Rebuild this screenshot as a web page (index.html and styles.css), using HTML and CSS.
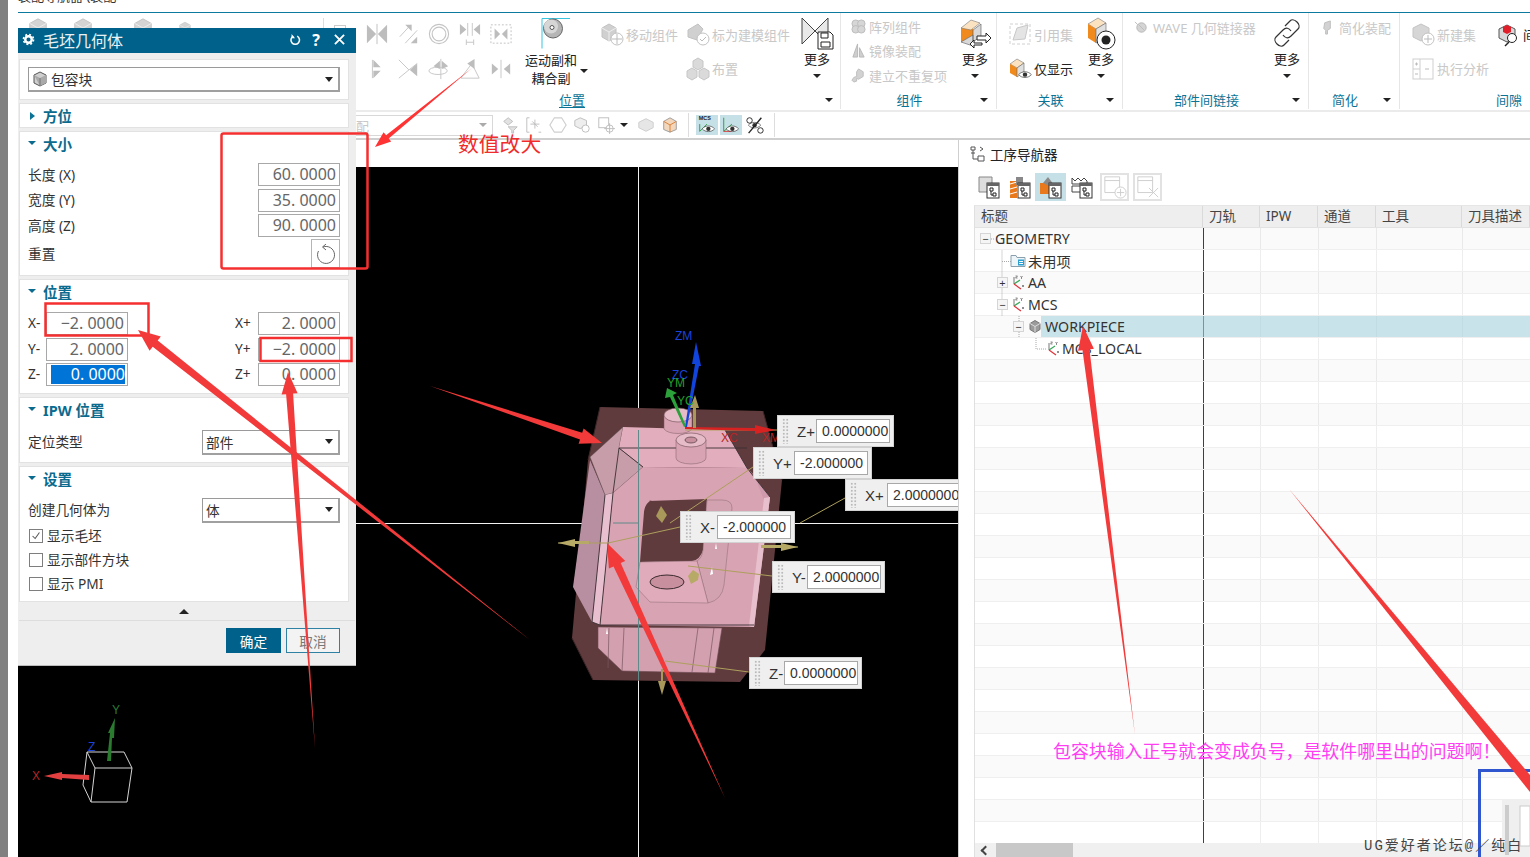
FILE: index.html
```html
<!DOCTYPE html>
<html lang="zh-CN">
<head>
<meta charset="utf-8">
<title>毛坯几何体</title>
<link rel="stylesheet" href="styles.css">
</head>
<body>
<svg class="defs" width="0" height="0" aria-hidden="true">
  <symbol id="c1" viewBox="0 0 24 24"><path d="M1 2l10 10L1 22zM23 2L13 12l10 10z" fill="#bdbdbd"/><path d="M12 1v22" stroke="#bdbdbd"/></symbol>
  <symbol id="c2" viewBox="0 0 24 24"><path d="M3 15L15 2M9 22L22 8" stroke="#c4c4c4" fill="none"/><path d="M9 2h7v7zM15 22h7v-7z" fill="#bdbdbd"/></symbol>
  <symbol id="c3" viewBox="0 0 24 24"><circle cx="12" cy="12" r="10.500" fill="none" stroke="#c4c4c4" stroke-width="1.200"/><circle cx="12" cy="12" r="7.500" fill="none" stroke="#c4c4c4" stroke-width="1.200"/></symbol>
  <symbol id="c4" viewBox="0 0 24 24"><path d="M1 1l7 6-7 6zM23 1l-7 6 7 6z" fill="#bdbdbd"/><path d="M9.500 0v14M14.500 0v14M8 21h8M8 18v6M16 18v6" stroke="#c4c4c4" fill="none"/></symbol>
  <symbol id="c5" viewBox="0 0 24 24"><rect x="1" y="2" width="22" height="20" fill="none" stroke="#bdbdbd" stroke-dasharray="2 2"/><path d="M5 6l6 6-6 6zM19 6l-6 6 6 6z" fill="#bdbdbd"/></symbol>
  <symbol id="c6" viewBox="0 0 24 24"><path d="M7 2v20" stroke="#c4c4c4"/><path d="M8 2l8 8H8zM8 14h8l-8 8z" fill="#bdbdbd"/></symbol>
  <symbol id="c7" viewBox="0 0 24 24"><path d="M2 2l11 11-11 9M22 6L13 13" stroke="#c4c4c4" fill="none"/><path d="M22 6v14l-8-7z" fill="#bdbdbd"/></symbol>
  <symbol id="c8" viewBox="0 0 24 24"><ellipse cx="11" cy="14" rx="10" ry="4" fill="none" stroke="#c4c4c4"/><path d="M14 1v22" stroke="#c4c4c4"/><path d="M13 3v9l-7-3zM15 3v9l7-3z" fill="#bdbdbd"/></symbol>
  <symbol id="c9" viewBox="0 0 24 24"><path d="M2 22h20L14 6 2 22" fill="none" stroke="#c4c4c4"/><path d="M9 6l8-5v11z" fill="#bdbdbd"/></symbol>
  <symbol id="c10" viewBox="0 0 24 24"><path d="M2 6l7 6-7 6zM22 6l-7 6 7 6z" fill="#bdbdbd"/><path d="M12 2v20" stroke="#c4c4c4"/></symbol>
  <symbol id="gcube" viewBox="0 0 24 24"><path d="M12 2l9 5v10l-9 5-9-5V7z" fill="#d4d4d4" stroke="#c2c2c2"/><path d="M3 7l9 5 9-5M12 12v10" stroke="#efefef" fill="none"/></symbol>
  <symbol id="move" viewBox="0 0 24 24"><path d="M9 2l7 4v9l-7 4-7-4V6z" fill="#d0d0d0" stroke="#c2c2c2"/><path d="M2 6l7 4 7-4M9 10v9" stroke="#eee" fill="none"/><circle cx="17" cy="17" r="6" fill="#fff" stroke="#c2c2c2"/><path d="M17 12v10M12 17h10" stroke="#bbb"/></symbol>
  <symbol id="mark" viewBox="0 0 24 24"><path d="M2 8l10-6 5 5-6 11-9-3z" fill="#d0d0d0" stroke="#c2c2c2"/><circle cx="17" cy="17" r="6" fill="#fff" stroke="#c2c2c2"/><path d="M14 17l2 2 4-4" stroke="#bbb" fill="none"/></symbol>
  <symbol id="tricube" viewBox="0 0 24 24"><path d="M12 1l5 3v6l-5 3-5-3V4zM6 11l5 3v6l-5 3-5-3v-6zM18 11l5 3v6l-5 3-5-3v-6z" fill="#dadada" stroke="#c6c6c6"/></symbol>
  <symbol id="hexes" viewBox="0 0 16 16"><circle cx="5" cy="5" r="4" fill="#d6d6d6" stroke="#bbb"/><circle cx="11" cy="5" r="4" fill="#d6d6d6" stroke="#bbb"/><circle cx="5" cy="11" r="4" fill="#d6d6d6" stroke="#bbb"/><circle cx="11" cy="11" r="4" fill="#d6d6d6" stroke="#bbb"/></symbol>
  <symbol id="mirror" viewBox="0 0 16 16"><path d="M7 1L2 15h5zM9 5v10h5z" fill="#cfcfcf" stroke="#b8b8b8"/></symbol>
  <symbol id="unique" viewBox="0 0 16 16"><path d="M8 1l5 3v5l-5 3-2-1v3l-3 1-2-2 2-3 3-1V4z" fill="#d2d2d2" stroke="#bdbdbd"/></symbol>
  <symbol id="refset" viewBox="0 0 24 24"><rect x="2" y="2" width="20" height="20" fill="none" stroke="#d0d0d0" stroke-dasharray="3 2"/><path d="M5 18L9 6l11-3-3 14z" fill="#e4e4e4" stroke="#c8c8c8"/></symbol>
  <symbol id="wave" viewBox="0 0 16 16"><path d="M3 8a5 5 0 0 1 10 0 5 5 0 0 1-10 0" fill="#d4d4d4" stroke="#b5b5b5"/><path d="M1 2l3 3M5 5l6 6" stroke="#bbb"/></symbol>
  <symbol id="simp" viewBox="0 0 16 16"><path d="M5 3l6-2v8l-3 2v4H6v-4L4 9z" fill="#d2d2d2" stroke="#bdbdbd"/></symbol>
  <symbol id="newset" viewBox="0 0 24 24"><path d="M10 2l8 4v9l-8 4-8-4V6z" fill="#d6d6d6" stroke="#c4c4c4"/><circle cx="17" cy="17" r="6" fill="#fff" stroke="#c2c2c2"/><path d="M17 13v8M13 17h8" stroke="#bbb"/></symbol>
  <symbol id="exec" viewBox="0 0 24 24"><rect x="2" y="2" width="20" height="20" fill="#fff" stroke="#cfcfcf"/><path d="M9 2v20M2 12h7" stroke="#cfcfcf"/><path d="M4 7h3M5.500 5.500v3M4 17h3M14 12h4" stroke="#bbb"/></symbol>
  <symbol id="axes" viewBox="0 0 15 15"><path d="M4 9V2" stroke="#777" fill="none"/><path d="M4 9l6-4" stroke="#34a853" stroke-width="1.200" fill="none"/><path d="M4 9l7 5" stroke="#e0333a" stroke-width="1.200" fill="none"/><path d="M5.500 1h2l-2 2h2M10.500 1l1 1.500 1-1.500M11.500 2.500v1.500M12 10l2 2M14 10l-2 2" stroke="#444" stroke-width=".6" fill="none"/></symbol>
  <symbol id="folder" viewBox="0 0 16 14"><path d="M1 2h5l1 2h8v9H1z" fill="#eef5f8" stroke="#8aa1ad"/><rect x="8" y="6" width="6" height="6" fill="#2aa0d2"/><path d="M9 8h4M9 10h4" stroke="#fff"/></symbol>
  <symbol id="wp" viewBox="0 0 14 14"><path d="M7 1l5 3v6l-5 3-5-3V4z" fill="#9b9b9b" stroke="#777"/><path d="M2 4l5 3 5-3M7 7v6" stroke="#ddd" fill="none"/></symbol>
  <symbol id="navprog" viewBox="0 0 24 24"><rect x="10" y="8" width="12" height="15" fill="#fff" stroke="#333"/><rect x="10" y="8" width="12" height="3" fill="#666"/><path d="M13 13h3v3h-3zM16 18h3v3h-3zM14 16v4h2" stroke="#222" fill="none"/></symbol>
  <symbol id="eyeck" viewBox="0 0 22 22"><path d="M1 12c5-6 15-6 20 0-5 6-15 6-20 0z" fill="#fff" stroke="#333"/><circle cx="11" cy="12" r="3.500" fill="#333"/></symbol>
</svg>

<div class="page">
  <div class="gutter"></div>
  <div class="app">
    <div class="menu-stub"><span class="menu-text">装配导航器 (装配</span></div>
    <div class="ribbon">
      <section class="rg rg-pos">
        <div class="rg-main">
          <div class="hidden-tools">
            <svg class="ht ht1"><use href="#gcube"/></svg><svg class="ht ht2"><use href="#gcube"/></svg><svg class="ht ht3"><use href="#gcube"/></svg><svg class="ht ht4"><use href="#gcube"/></svg>
            <i class="ht-sep"></i><i class="ht-box"></i>
          </div>
          <div class="constraints">
            <svg class="cicon"><use href="#c1"/></svg><svg class="cicon"><use href="#c2"/></svg><svg class="cicon"><use href="#c3"/></svg><svg class="cicon"><use href="#c4"/></svg><svg class="cicon"><use href="#c5"/></svg>
            <svg class="cicon"><use href="#c6"/></svg><svg class="cicon"><use href="#c7"/></svg><svg class="cicon"><use href="#c8"/></svg><svg class="cicon"><use href="#c9"/></svg><svg class="cicon"><use href="#c10"/></svg>
          </div>
          <div class="joint">
            <svg class="joint-icon" viewBox="0 0 30 32"><path d="M1 31V1h28" fill="none" stroke="#39c3dd"/><circle cx="12" cy="11" r="9.500" fill="#b5b5b5" stroke="#666"/><circle cx="10" cy="9" r="7" fill="#d6d6d6"/><circle cx="11" cy="10" r="2" fill="#fff" stroke="#555"/></svg>
            <div class="joint-cap">运动副和<br>耦合副<i class="tri tri-d joint-tri"></i></div>
          </div>
          <div class="twocol">
            <div class="tool off"><svg class="ic24"><use href="#move"/></svg>移动组件</div>
            <div class="tool off"><svg class="ic24"><use href="#mark"/></svg>标为建模组件</div>
            <div class="tool off tool-c2"><svg class="ic24"><use href="#tricube"/></svg>布置</div>
          </div>
          <div class="more more-pos">
            <svg class="more-ic" viewBox="0 0 34 34"><path d="M2 2l13 13L2 28zM28 2L15 15l13 13z" fill="#e8e8e8" stroke="#444"/><path d="M18 16h12l3 3v14H18z" fill="#fff" stroke="#222"/><path d="M21 17h7v5h-7zM21 26h9v5h-9z" fill="none" stroke="#222"/></svg>
            <span>更多</span><i class="tri tri-d"></i>
          </div>
        </div>
        <div class="rg-title rg-title-pos"><span class="u">位置</span><i class="tri tri-d"></i></div>
      </section>

      <section class="rg rg-comp">
        <div class="rg-main">
          <div class="stack3">
            <div class="tool off"><svg class="ic15"><use href="#hexes"/></svg>阵列组件</div>
            <div class="tool off"><svg class="ic15"><use href="#mirror"/></svg>镜像装配</div>
            <div class="tool off"><svg class="ic15"><use href="#unique"/></svg>建立不重复项</div>
          </div>
          <div class="more">
            <svg class="more-ic" viewBox="0 0 34 34"><path d="M3 12l12-7v14L3 26z" fill="#f08a1d"/><path d="M3 12l10-8 9 3-9 7z" fill="#fbe3c2" stroke="#777" stroke-width=".6"/><path d="M15 14l8-6v12l-8 6zM3 26l12-7v11z" fill="#d8d8d8" stroke="#555" stroke-width=".6"/><path d="M19 20h9v-3l5 5-5 5v-3h-9zM24 27h-8v-3l-4 4 4 4v-3h8z" fill="#fff" stroke="#222"/></svg>
            <span>更多</span><i class="tri tri-d"></i>
          </div>
        </div>
        <div class="rg-title"><span>组件</span><i class="tri tri-d"></i></div>
      </section>

      <section class="rg rg-assoc">
        <div class="rg-main">
          <div class="stack2">
            <div class="tool off"><svg class="ic24"><use href="#refset"/></svg>引用集</div>
            <div class="tool"><svg class="ic24" viewBox="0 0 24 24"><path d="M2 7l7-5 7 4-7 5z" fill="#fbe3c2" stroke="#777" stroke-width=".6"/><path d="M2 7l7 4v9l-7-4z" fill="#f08a1d"/><path d="M9 11l7-5v9l-7 5z" fill="#e0e0e0" stroke="#666" stroke-width=".6"/><use href="#eyeck" x="10" y="10" width="14" height="14"/></svg>仅显示</div>
          </div>
          <div class="more">
            <svg class="more-ic" viewBox="0 0 34 34"><path d="M4 8l10-6 8 5-10 6z" fill="#fbe3c2" stroke="#777" stroke-width=".6"/><path d="M4 8l8 5v14l-8-5z" fill="#f08a1d"/><path d="M12 13l10-6v14l-10 6z" fill="#e0e0e0" stroke="#666" stroke-width=".6"/><circle cx="22" cy="24" r="9" fill="#fff" stroke="#222"/><circle cx="22" cy="24" r="4.500" fill="#222"/></svg>
            <span>更多</span><i class="tri tri-d"></i>
          </div>
        </div>
        <div class="rg-title"><span>关联</span><i class="tri tri-d"></i></div>
      </section>

      <section class="rg rg-link">
        <div class="rg-main">
          <div class="stack-wave">
            <div class="tool off"><svg class="ic15"><use href="#wave"/></svg>WAVE 几何链接器</div>
          </div>
          <div class="more">
            <svg class="more-ic" viewBox="0 0 34 34"><path d="M15 10l5-5c4-4 12 4 8 8l-7 7c-3 3-6 2-8-1M19 24l-5 5c-4 4-12-4-8-8l7-7c3-3 6-2 8 1" fill="none" stroke="#333" stroke-width="1.200"/></svg>
            <span>更多</span><i class="tri tri-d"></i>
          </div>
        </div>
        <div class="rg-title"><span>部件间链接</span><i class="tri tri-d"></i></div>
      </section>

      <section class="rg rg-simp">
        <div class="rg-main">
          <div class="stack-wave"><div class="tool off"><svg class="ic15"><use href="#simp"/></svg>简化装配</div></div>
        </div>
        <div class="rg-title"><span>简化</span><i class="tri tri-d"></i></div>
      </section>

      <section class="rg rg-gap">
        <div class="rg-main">
          <div class="stack2 stack-gap">
            <div class="tool off"><svg class="ic24"><use href="#newset"/></svg>新建集</div>
            <div class="tool off"><svg class="ic24"><use href="#exec"/></svg>执行分析</div>
          </div>
          <div class="tool gapcheck"><svg class="ic24" viewBox="0 0 24 24"><path d="M10 2l8 4v9l-8 4-8-4V6z" fill="#d8d8d8" stroke="#555"/><path d="M6 4l4-2 4 2v5l-4 2-4-2z" fill="#e11f2b"/><circle cx="15" cy="15" r="4.500" fill="#fff" stroke="#222"/><path d="M12 19l-4 4" stroke="#222" stroke-width="1.500"/></svg>间隙</div>
        </div>
        <div class="rg-title"><span>间隙</span></div>
      </section>
    </div>
    <div class="band"></div>

    <div class="toolbar">
      <div class="tb-select"><span>配</span><i class="tri tri-d tri-grey"></i></div>
      <div class="tb-icons">
        <svg class="tb-ic" viewBox="0 0 20 20"><path d="M3 6l5-4 5 4-5 4zM8 12h10l-4 4v3h-2v-3z" fill="#e2e2e2" stroke="#bbb"/></svg>
        <svg class="tb-ic" viewBox="0 0 20 20"><path d="M2 2h3M2 2v16h3M18 18h-3" fill="none" stroke="#bbb"/><path d="M8 6l6 6M11 4v10M6 9h10" stroke="#bbb" fill="none"/></svg>
        <svg class="tb-ic" viewBox="0 0 20 20"><path d="M6 2h8l5 8-5 8H6l-5-8z" fill="none" stroke="#cfcfcf" stroke-width="1.300"/></svg>
        <svg class="tb-ic" viewBox="0 0 20 20"><path d="M8 2l7 3v6l-7 3-6-3V5z" fill="#eee" stroke="#bbb"/><circle cx="14" cy="14" r="4" fill="#fff" stroke="#bbb"/></svg>
        <svg class="tb-ic" viewBox="0 0 20 20"><rect x="2" y="2" width="11" height="11" fill="none" stroke="#bbb"/><circle cx="14" cy="14" r="4" fill="#fff" stroke="#bbb"/><path d="M14 8v12M8 14h12" stroke="#bbb"/></svg>
        <i class="tri tri-d tb-tri"></i>
        <svg class="tb-ic" viewBox="0 0 20 20"><path d="M10 3l8 4v6l-8 4-8-4V7z" fill="#e6e6e6" stroke="#ccc"/></svg>
        <svg class="tb-ic" viewBox="0 0 20 20"><path d="M10 2l7 4v9l-7 3-7-3V6z" fill="#f2d7bd" stroke="#999"/><path d="M3 6l7 4 7-4M10 10v8" stroke="#d8792c" fill="none"/></svg>
        <span class="tb-sep"></span>
        <span class="tb-on"><svg class="tb-ic2" viewBox="0 0 24 22"><text x="3" y="6" class="mcs-t">MCS</text><path d="M4 10v8M4 18l8-8" stroke="#2a9a3d" fill="none"/><use href="#eyeck" x="5" y="7" width="17" height="15"/></svg></span>
        <span class="tb-on"><svg class="tb-ic2" viewBox="0 0 24 22"><path d="M4 3v15M4 18l9-8" stroke="#2a9a3d" fill="none"/><path d="M4 18h8" stroke="#d33" /><use href="#eyeck" x="5" y="7" width="17" height="15"/></svg></span>
        <span class="tb-off"><svg class="tb-ic2" viewBox="0 0 24 22"><use href="#eyeck" x="3" y="3" width="17" height="15"/><path d="M19 3L5 20" stroke="#222" stroke-width="1.500"/><circle cx="6" cy="6" r="3" fill="none" stroke="#222"/><circle cx="18" cy="17" r="3" fill="none" stroke="#222"/></svg></span>
        <span class="tb-sep tb-sep2"></span>
      </div>
    </div>

    <div class="workspace">
      <div class="graphics">
        <div class="tabstrip"></div>
        <div class="canvas">
          <svg class="scene" viewBox="18 167 940 690">
            <path d="M638.500 167V857M18 523.500H958" stroke="#f2f2f2" fill="none"/>
            <polygon points="600,407 763,411 782,480 765,650 740,682 593,680 572,638 588,460" fill="#5f3b3d"/>
            <path d="M763 411L782 480M600 407L588 460M572 638L593 680" stroke="#3e2527" fill="none"/>
            <polygon points="598,627 722,628 715,673 622,671 598,648" fill="#d3a0b0" stroke="#6b4a50" stroke-width=".6"/>
            <path d="M609 628L608 668M624 628L622 671M714 628L708 673M698 628L692 672" stroke="#7a5660" stroke-width=".7" fill="none"/>
            <polygon points="590,460 605,495 592,622 573,587" fill="#b88fa0"/>
            <polygon points="623,427 619,448 643,467 613,493 605,495 590,457" fill="#c79da9" stroke="#5d4a4f" stroke-width=".5"/>
            <polygon points="605,495 613,493 600,625 592,622" fill="#e7bfce"/>
            <polygon points="623,427 725,430 747,468 643,467 619,448" fill="#e2aebd"/>
            <polygon points="643,467 747,468 770,497 754,627 600,625 613,493" fill="#d8a3b3"/>
            <polygon points="747,468 770,497 768,510 754,475" fill="#cf9aab"/>
            <polygon points="764,498 770,497 754,627 749,626" fill="#e8bfcc"/>
            <path d="M649 501L707 499 703 550Q700 560 692 561L640 562 644 512Q645 503 652 500z" fill="#5f3b3d"/>
            <path d="M707 500H722Q732 500 732 508L724 585Q722 600 708 603L697 561Q702 558 703 550z" fill="#d3a2b0" stroke="#8b6a72" stroke-width=".5"/>
            <polygon points="640,562 697,561 708,603 650,602 636,587" fill="#e0acbc" stroke="#8b6a72" stroke-width=".5"/>
            <ellipse cx="667" cy="582" rx="17" ry="7" fill="#c8909f" stroke="#3a2a2e"/>
            <path d="M716 543l-1 6 2 0zM712 567l-2 8 3-1z M607 628l-1 6 2 0z" fill="#fff"/>
            <path d="M619 448H747M619 448L613 493M643 467L619 448M605 495L592 622M747 468L770 497M592 622L600 625H754M613 493L600 625M725 430L747 468" stroke="#3a3034" stroke-width=".9" fill="none"/>
            <path d="M664 415V429A15 7 0 0 0 692 429V415z" fill="#d8a3b3" stroke="#7b5a62" stroke-width=".5"/>
            <ellipse cx="678" cy="415" rx="14" ry="7" fill="#e6bcc8" stroke="#6b4a52" stroke-width=".6"/>
            <path d="M676 440V458A15 6 0 0 0 706 458V440z" fill="#d8a3b3" stroke="#7b5a62" stroke-width=".5"/>
            <ellipse cx="691" cy="440" rx="15" ry="7" fill="#e6bcc8" stroke="#6b4a52" stroke-width=".6"/>
            <ellipse cx="691" cy="440" rx="6" ry="3" fill="#c8909f" stroke="#3a2a2e" stroke-width=".6"/>
            <path d="M638.500 430V680" stroke="#5e8a8a" fill="none"/>
            <path d="M613 523H638" stroke="#5e8a8a" fill="none"/>
            <path d="M777 430H685M753 467L670 523M845 498L800 523M680 527L608 543H558M798 547H762M772 576L688 566M749 672L665 661" stroke="#ad9f5c" fill="none"/>
            <polygon points="696,342 692,364 695,364 685,427 687,427 699,366 701,366" fill="#1144dd"/>
            <polygon points="667,388 665,398 670,397 684,427 686,426 673,395 677,393" fill="#2ca03a"/>
            <polygon points="776,430 755,425 755,428 685,427 685,429 755,431 755,434" fill="#d82222"/>
            <path d="M695 395l-5 13h3v20h3v-20h3z" fill="#a8985a"/>
            <path d="M558 543l17-4v8z M569 541h20v3h-20z" fill="#b7a966"/>
            <path d="M798 547l-17-4v8z M761 545h20v3h-20z" fill="#b7a966"/>
            <path d="M661 506l-5 10 6 7 5-8z" fill="#a8985a"/>
            <path d="M693 570l-5 6 3 8 7-4 1-6z" fill="#b7a966"/>
            <path d="M662 695l-4-14h3v-12h2v12h3z" fill="#a8985a"/>
            <text x="675" y="340" class="ax ax-b">ZM</text>
            <text x="672" y="379" class="ax ax-b">ZC</text>
            <text x="667" y="387" class="ax ax-g">YM</text>
            <text x="677" y="405" class="ax ax-g">YC</text>
            <text x="721" y="442" class="ax ax-r">XC</text>
            <text x="762" y="442" class="ax ax-r">XM</text>
            <path d="M87 752H124L132 768H95ZM87 752L83 785 91 802H127L132 768M95 768L91 802" fill="none" stroke="#d4d4d4"/>
            <polygon points="89,775 62,774 62,772 44,776 62,780 62,778 89,780" fill="#e24040"/>
            <polygon points="107,761 111,761 112,738 114,738 115,718 108,733 110,733" fill="#2a7a30"/>
            <text x="32" y="780" class="ax ax-r">X</text>
            <text x="112" y="714" class="ax ax-g2">Y</text>
            <text x="88" y="751" class="ax ax-b">Z</text>
          </svg>
          <div class="leader l-zp"><i class="dots"></i><span>Z+</span><b class="lv">0.0000000</b></div>
          <div class="leader l-yp"><i class="dots"></i><span>Y+</span><b class="lv">-2.000000</b></div>
          <div class="leader l-xp"><i class="dots"></i><span>X+</span><b class="lv">2.0000000</b></div>
          <div class="leader l-xm"><i class="dots"></i><span>X-</span><b class="lv">-2.000000</b></div>
          <div class="leader l-ym"><i class="dots"></i><span>Y-</span><b class="lv">2.0000000</b></div>
          <div class="leader l-zm"><i class="dots"></i><span>Z-</span><b class="lv">0.0000000</b></div>
        </div>
      </div>

      <aside class="nav">
        <div class="nav-title">
          <svg class="nav-title-ic" viewBox="0 0 16 16"><path d="M1 1h4v3H1zM1 7h4M3 4v9h5M10 1l3 2-3 2M8 10h6v5H8z" fill="none" stroke="#555"/></svg>工序导航器
        </div>
        <div class="nav-tools">
          <span class="nt"><svg class="nt-ic" viewBox="0 0 24 24"><path d="M2 2h13v15H2z" fill="#ddd" stroke="#888"/><use href="#navprog"/></svg></span>
          <span class="nt"><svg class="nt-ic" viewBox="0 0 24 24"><path d="M2 6h7v17H2z" fill="#e8791c"/><path d="M2 9l7-2M2 14l7-2M2 19l7-2" stroke="#fff"/><path d="M8 2h7v8H8z" fill="#888"/><use href="#navprog"/></svg></span>
          <span class="nt nt-on"><svg class="nt-ic" viewBox="0 0 24 24"><path d="M1 8h12v11H1z" fill="#e8791c"/><path d="M4 8l5-6 6 8-3 2z" fill="#8a8a8a"/><use href="#navprog"/></svg></span>
          <span class="nt"><svg class="nt-ic" viewBox="0 0 24 24"><path d="M2 3l3 3 3-3 3 3 3-3 3 3v3H2zM2 11h12v6H2z" fill="#fff" stroke="#444"/><use href="#navprog"/></svg></span>
          <span class="nt nt-box nt-box1"><svg class="nt-ic2" viewBox="0 0 26 26"><path d="M2 2h16v17H2zM2 6h16" fill="none" stroke="#ccc"/><circle cx="19" cy="19" r="6" fill="#fff" stroke="#ccc"/><path d="M19 15v8M15 19h8" stroke="#ccc"/></svg></span>
          <span class="nt nt-box"><svg class="nt-ic2" viewBox="0 0 26 26"><path d="M2 2h16v17H2zM2 6h16" fill="none" stroke="#ccc"/><path d="M14 14l10 10M24 14L14 24" stroke="#ccc"/></svg></span>
        </div>
        <div class="table">
          <div class="thead">
            <span>标题</span><span>刀轨</span><span>IPW</span><span>通道</span><span>工具</span><span>刀具描述</span>
          </div>
          <div class="tbody">
            <svg class="tree-lines" width="80" height="130"><path d="M27 22.500V88M27 33.500H36M27 55.500H30M27 77.500H30M44 88V110M44 99H40M61 110V121H72M16 11H20" stroke="#aaa" stroke-dasharray="1 1" fill="none"/></svg>
            <div class="row"><i class="exp l0">−</i><span class="t0">GEOMETRY</span></div>
            <div class="row"><svg class="ti l-un"><use href="#folder"/></svg><span>未用项</span></div>
            <div class="row"><i class="exp l1">+</i><svg class="ti"><use href="#axes"/></svg><span>AA</span></div>
            <div class="row"><i class="exp l1">−</i><svg class="ti"><use href="#axes"/></svg><span>MCS</span></div>
            <div class="row"><i class="exp l2">−</i><svg class="ti ti-wp"><use href="#wp"/></svg><span class="sel">WORKPIECE</span></div>
            <div class="row"><svg class="ti l-loc"><use href="#axes"/></svg><span>MCS_LOCAL</span></div>
            <div class="row"></div><div class="row"></div><div class="row"></div><div class="row"></div><div class="row"></div>
            <div class="row"></div><div class="row"></div><div class="row"></div><div class="row"></div><div class="row"></div>
            <div class="row"></div><div class="row"></div><div class="row"></div><div class="row"></div><div class="row"></div>
            <div class="row"></div><div class="row"></div><div class="row"></div><div class="row"></div><div class="row"></div>
            <div class="row"></div><div class="row"></div>
          </div>
          <div class="hscroll"><i class="chev"></i><i class="thumb"></i></div>
        </div>
      </aside>
    </div>
  </div>

  <div class="dialog">
    <header class="dlg-head">
      <svg class="dlg-gear" viewBox="0 0 16 16"><circle cx="8" cy="8" r="4" fill="none" stroke="#fff" stroke-width="3"/><circle cx="8" cy="8" r="6.200" fill="none" stroke="#fff" stroke-width="2" stroke-dasharray="2.400 2.470"/></svg>
      <span class="dlg-title">毛坯几何体</span>
      <svg class="dlg-act" viewBox="0 0 14 14"><path d="M5 2.500a5 5 0 1 0 4.500 0" fill="none" stroke="#fff" stroke-width="1.800"/><path d="M3 0v5h4" fill="#fff"/></svg>
      <span class="dlg-q">?</span>
      <svg class="dlg-act dlg-x" viewBox="0 0 12 12"><path d="M1 1l10 10M11 1L1 11" stroke="#fff" stroke-width="2"/></svg>
    </header>
    <div class="dlg-body">
      <div class="pn pn-type">
        <div class="sel-box sel-full"><svg class="cube" viewBox="0 0 16 16"><path d="M8 1l6 3v8l-6 3-6-3V4z" fill="#cfcfcf" stroke="#555"/><path d="M2 4l6 3 6-3v8l-6 3z" fill="#a9a9a9"/><path d="M8 7v8" stroke="#777"/></svg><span>包容块</span><i class="tri tri-d tri-k"></i></div>
      </div>
      <div class="pn pn-orient"><div class="sec"><i class="tri tri-r"></i>方位</div></div>
      <div class="pn pn-size">
        <div class="sec"><i class="tri tri-d tri-t"></i>大小</div>
        <div class="frow frow-first"><label>长度 (X)</label><div class="fld">60. 0000</div></div>
        <div class="frow"><label>宽度 (Y)</label><div class="fld">35. 0000</div></div>
        <div class="frow"><label>高度 (Z)</label><div class="fld">90. 0000</div></div>
        <div class="frow frow-reset"><label>重置</label><button class="reset" type="button"><svg viewBox="0 0 20 20" class="reset-ic"><path d="M7 3a8.500 8.500 0 1 1-4.500 4" fill="none" stroke="#666"/><path d="M10 0L6.500 3 10 6" fill="none" stroke="#666"/></svg></button></div>
      </div>
      <div class="pn pn-place">
        <div class="sec"><i class="tri tri-d tri-t"></i>位置</div>
        <div class="place-grid">
          <label>X-</label><div class="fld">−2. 0000</div><label class="lab2">X+</label><div class="fld">2. 0000</div>
          <label>Y-</label><div class="fld">2. 0000</div><label class="lab2">Y+</label><div class="fld">−2. 0000</div>
          <label>Z-</label><div class="fld fld-hl"><span>0. 0000</span></div><label class="lab2">Z+</label><div class="fld">0. 0000</div>
        </div>
      </div>
      <div class="pn pn-ipw">
        <div class="sec"><i class="tri tri-d tri-t"></i>IPW 位置</div>
        <div class="srow"><label>定位类型</label><div class="sel-box sel-half"><span>部件</span><i class="tri tri-d tri-k"></i></div></div>
      </div>
      <div class="pn pn-set">
        <div class="sec"><i class="tri tri-d tri-t"></i>设置</div>
        <div class="srow"><label>创建几何体为</label><div class="sel-box sel-half"><span>体</span><i class="tri tri-d tri-k"></i></div></div>
        <div class="chk chk-first"><i class="box"><svg viewBox="0 0 14 14"><path d="M3 7l3 3 5-7" fill="none" stroke="#555" stroke-width="1.200"/></svg></i>显示毛坯</div>
        <div class="chk"><i class="box"></i>显示部件方块</div>
        <div class="chk"><i class="box"></i>显示 PMI</div>
      </div>
      <div class="collapse"><i class="tri tri-u"></i></div>
      <div class="dlg-foot">
        <button class="btn btn-ok" type="button">确定</button>
        <button class="btn btn-cancel" type="button">取消</button>
      </div>
    </div>
  </div>

  <svg class="notes" viewBox="0 0 1530 857">
    <rect x="1479.500" y="770.500" width="70" height="100" fill="none" stroke="#2f55cf" stroke-width="3"/>
    <rect x="1502" y="800" width="28" height="57" fill="#efefef"/>
    <rect x="1505" y="805" width="4" height="50" fill="#ccc"/>
    <rect x="1520" y="806" width="10" height="40" fill="#fff" stroke="#ccc"/>
    <rect x="221.500" y="133.500" width="146" height="135" rx="2" fill="none" stroke="#f52f2f" stroke-width="2.500"/>
    <rect x="45.500" y="303.500" width="103" height="32" fill="none" stroke="#f52f2f" stroke-width="2.500"/>
    <rect x="260.500" y="338" width="91" height="23" fill="none" stroke="#f52f2f" stroke-width="2.500"/>
    <polygon points="472,68 388.700,138.500 391.200,141.600 375,147 383.600,132.200 386.100,135.300" fill="#f33"/>
    <polygon points="530,640 157.700,340.500 160.800,336.500 138,330 149.600,350.700 152.700,346.700" fill="#f33a3a"/>
    <polygon points="315,748 293.100,393.600 297.600,393.300 288,372 281.600,394.500 286.100,394.200" fill="#f33a3a"/>
    <polygon points="430,386 580,439.400 578.600,443.700 602,443 583.600,428.500 582.200,432.800" fill="#f33a3a"/>
    <polygon points="725,798 620.700,563.100 625.300,561 607,543 608.900,568.600 613.500,566.500" fill="#f33a3a"/>
    <polygon points="1135,735 1089.500,349.400 1093.900,348.800 1083,326 1078.100,350.800 1082.500,350.200" fill="#f33a3a"/>
    <polygon points="1289,489 1530,775 1530,792" fill="#f33a3a"/>
  </svg>
  <div class="note-red">数值改大</div>
  <div class="note-pink">包容块输入正号就会变成负号，是软件哪里出的问题啊！</div>
  <div class="wmark">UG爱好者论坛@／纯白 ＼</div>
</div>
</body>
</html>
```

FILE: styles.css
```css
* { box-sizing: border-box; }
html, body { margin: 0; height: 100%; background: #fff; }
body { font: 13px "Noto Sans", "Noto Sans CJK SC", sans-serif; color: #333; overflow: hidden; }
.defs { position: absolute; }
i { font-style: normal; }

.page { position: relative; display: flex; width: 1530px; height: 857px; overflow: hidden; background: #fff; }
.gutter { width: 8px; margin-right: 10px; background: #808080; flex: none; }
.app { flex: 1; min-width: 0; display: flex; flex-direction: column; }

/* triangles */
.tri { display: inline-block; width: 0; height: 0; flex: none; }
.tri-d { border: 4px solid transparent; border-top: 4px solid #222; border-bottom: 0; }
.tri-u { border: 5px solid transparent; border-bottom: 5px solid #222; border-top: 0; }
.tri-r { border: 4px solid transparent; border-left: 5px solid #0b7396; border-right: 0; margin-right: 8px; margin-left: 2px; }
.tri-t { border-top-color: #0b6b8e; margin-right: 7px; }
.tri-k { border-width: 5px 4px 0; border-top-color: #222; margin-left: auto; }
.tri-grey { border-top-color: #aaa; }

/* top */
.menu-stub { height: 12px; overflow: hidden; }
.menu-text { display: block; margin-top: -11px; font-size: 13px; line-height: 15px; color: #333; }
.ribbon { display: flex; height: 98px; border-top: 1px solid #0b7a9e; flex: none; overflow: hidden; }
.band { height: 2px; background: #ebebeb; flex: none; }

.rg { flex: none; display: flex; flex-direction: column; position: relative; border-right: 1px solid #e6e6e6; margin-bottom: 1px; }
.rg-pos { width: 823px; }
.rg-comp { width: 156px; }
.rg-assoc { width: 126px; }
.rg-link { width: 186px; }
.rg-simp { width: 91px; }
.rg-gap { width: 236px; border-right: 0; }
.rg-main { display: flex; height: 79px; }
.rg-title { height: 17px; position: relative; display: flex; justify-content: center; align-items: center; padding-right: 18px; color: #0b7396; font-size: 13px; line-height: 17px; }
.rg-title .tri { position: absolute; right: 8px; top: 6px; }
.rg-title-pos { padding-left: 286px; padding-right: 0; }
.rg-title-pos .tri { right: 7px; }
.u { text-decoration: underline; text-underline-offset: 2px; }

.hidden-tools { width: 343px; flex: none; position: relative; overflow: hidden; height: 16px; }
.ht { width: 22px; height: 22px; position: absolute; top: 4px; }
.ht1 { left: 9px; } .ht2 { left: 54px; } .ht3 { left: 114px; } .ht4 { left: 160px; width: 14px; }
.ht-sep { position: absolute; left: 305px; top: 5px; width: 1px; height: 11px; background: #ddd; }
.ht-box { position: absolute; left: 316px; top: 12px; width: 12px; height: 6px; border: 1px solid #ccc; }
.constraints { display: grid; grid-template-columns: repeat(5, 31px); grid-auto-rows: 35px; padding-top: 3px; flex: none; }
.cicon { width: 22px; height: 22px; justify-self: center; align-self: center; }
.joint { width: 70px; flex: none; display: flex; flex-direction: column; align-items: center; padding-top: 4px; margin-right: 14px; }
.joint-icon { width: 30px; height: 33px; margin-left: 10px; }
.joint-cap { position: relative; text-align: center; font-size: 13px; line-height: 18px; margin-top: 1px; color: #222; }
.joint-tri { position: absolute; right: -11px; top: 18px; }
.twocol { width: 190px; flex: none; display: grid; grid-template-columns: 86px 104px; grid-auto-rows: 34.500px; padding-top: 4px; }
.tool-c2 { grid-column: 2; }
.tool { display: flex; align-items: center; gap: 2px; color: #222; font-size: 13px; white-space: nowrap; }
.tool.off { color: #c8c8c8; }
.ic24 { width: 24px; height: 24px; flex: none; }
.ic15 { width: 15px; height: 15px; flex: none; margin-right: 1px; }
.more { width: 34px; flex: none; margin-left: auto; margin-right: 4px; display: flex; flex-direction: column; align-items: center; padding-top: 3px; font-size: 13px; line-height: 18px; color: #222; }
.more-ic { width: 34px; height: 34px; }
.more .tri { margin-top: 6px; }
.more-pos { margin-left: 10px; margin-right: 6px; }
.stack3 { padding: 1px 0 0 10px; display: grid; grid-auto-rows: 24.500px; }
.stack2 { padding: 4px 0 0 11px; display: grid; grid-auto-rows: 34.500px; width: 90px; }
.stack-wave { padding: 6px 0 0 11px; }
.stack-wave .tool { height: 16px; gap: 3px; }
.stack-gap { width: 97px; }
.gapcheck { height: 35px; margin-top: 4px; }

/* toolbar */
.toolbar { display: flex; height: 28px; border-bottom: 2px solid #cfcfcf; flex: none; align-items: center; }
.tb-select { margin-left: 338px; width: 137px; height: 21px; border: 1px solid #d8d8d8; border-left: 0; display: flex; align-items: center; padding-right: 5px; color: #c8c8c8; justify-content: space-between; }
.tb-icons { display: flex; align-items: center; margin-left: 8px; height: 100%; }
.tb-ic { width: 18px; height: 18px; margin-right: 6px; }
.tb-tri { margin: 0 9px 0 -1px; }
.tb-sep { width: 1px; height: 24px; background: #ddd; margin: 0 7px 0 3px; }
.tb-on, .tb-off { width: 22px; height: 20px; display: flex; align-items: center; justify-content: center; margin-right: 2px; }
.tb-on { background: #c6e0e7; }
.tb-ic2 { width: 22px; height: 20px; }
.mcs-t { font: 700 6px "Liberation Sans", sans-serif; fill: #222; }
.tb-sep2 { margin-left: 6px; }

/* workspace */
.workspace { flex: 1; display: flex; min-height: 0; }
.graphics { width: 941px; flex: none; display: flex; flex-direction: column; border-right: 1px solid #cfcfcf; }
.tabstrip { height: 27px; flex: none; background: #fff; }
.canvas { position: relative; flex: 1; background: #000; overflow: hidden; }
.scene { display: block; width: 940px; height: 690px; }
.ax { font: 12px "Liberation Sans", sans-serif; }
.ax-b { fill: #1a44dd; }
.ax-g { fill: #22a02f; }
.ax-g2 { fill: #2d7a33; }
.ax-r { fill: #b52525; }

.leader { position: absolute; display: flex; align-items: center; height: 32px; background: #efefef; border: 1px solid #d2d2d2; padding-left: 4px; font: 14px "Liberation Sans", sans-serif; color: #333; }
.dots { width: 7px; height: 26px; margin-right: 8px; flex: none; background: radial-gradient(circle, #b9b9b9 1.200px, transparent 1.300px) 0 0 / 3.500px 3.500px; }
.leader span { flex: 1; font-size: 15px; }
.lv { font-weight: 400; width: 74px; height: 24px; line-height: 22px; background: #fff; border: 1px solid #a8a8a8; padding-left: 5px; margin-right: 3px; overflow: hidden; white-space: nowrap; flex: none; }
.l-zp { left: 759px; top: 248px; width: 117px; }
.l-yp { left: 735px; top: 280px; width: 119px; }
.l-xp { left: 827px; top: 312px; width: 120px; }
.l-xm { left: 662px; top: 344px; width: 115px; }
.l-ym { left: 754px; top: 394px; width: 113px; }
.l-zm { left: 731px; top: 490px; width: 113px; }

/* navigator */
.nav { flex: 1; min-width: 0; display: flex; flex-direction: column; padding-left: 15px; background: #fff; }
.nav-title { height: 27px; display: flex; align-items: center; margin-left: -4px; gap: 4px; font-size: 13.500px; color: #222; flex: none; }
.nav-title-ic { width: 16px; height: 16px; }
.nav-tools { display: flex; height: 32px; align-items: center; flex: none; margin: 4px 0 2px -1px; }
.nt { width: 31px; height: 28px; display: flex; align-items: center; justify-content: center; flex: none; }
.nt-on { background: #c6e0e7; }
.nt-box { width: 29px; border: 2px solid #e2e2e2; margin-left: 4px; background: #fff; }
.nt-box1 { margin-left: 3px; }
.nt-ic { width: 24px; height: 24px; }
.nt-ic2 { width: 24px; height: 24px; }
.table { flex: 1; min-height: 0; display: flex; flex-direction: column; border-left: 1px solid #e0e0e0; border-top: 1px solid #e6e6e6; }
.thead { height: 22px; flex: none; display: grid; grid-template-columns: 228px 57px 58px 58px 86px 1fr; background: #eee; border-bottom: 1px solid #e2e2e2; line-height: 21px; font-size: 13.500px; color: #444; }
.thead span { padding-left: 6px; border-right: 1px solid #dadada; }
.tbody { position: relative; flex: 1; min-height: 0; overflow: hidden; background:
  linear-gradient(#404040, #404040) 228px 0 / 1px 100% no-repeat,
  linear-gradient(#eee, #eee) 285px 0 / 1px 100% no-repeat,
  linear-gradient(#eee, #eee) 343px 0 / 1px 100% no-repeat,
  linear-gradient(#eee, #eee) 401px 0 / 1px 100% no-repeat,
  linear-gradient(#eee, #eee) 487px 0 / 1px 100% no-repeat; }
.row { height: 22px; display: flex; align-items: center; font-size: 14.200px; color: #333; white-space: nowrap; border-bottom: 1px solid #efefef; }
.row:nth-child(even) { background: rgba(0, 0, 0, 0.018); }
.tree-lines { position: absolute; left: 0; top: 0; }
.exp { width: 11px; height: 11px; border: 1px solid #d5d5d5; background: #f5f5f5; flex: none; font-size: 11px; line-height: 9px; text-align: center; color: #333; position: relative; }
.l0 { margin-left: 5px; margin-right: 4px; }
.l1 { margin-left: 22px; margin-right: 2px; }
.l2 { margin-left: 38px; margin-right: 4px; }
.ti { width: 15px; height: 15px; flex: none; margin-right: 3px; position: relative; }
.ti-wp { width: 14px; margin-right: 2px; }
.l-un { margin-left: 35px; width: 16px; margin-right: 2px; }
.l-loc { margin-left: 70px; margin-right: 2px; }
.sel { flex: 1; align-self: stretch; background: rgba(166, 210, 222, 0.58); line-height: 21px; margin-left: -3px; padding-left: 4px; }
.hscroll { height: 14px; flex: none; display: flex; align-items: center; background: #f0f0f0; position: relative; }
.chev { width: 7px; height: 7px; border-left: 2px solid #444; border-bottom: 2px solid #444; transform: rotate(45deg); margin-left: 7px; }
.thumb { width: 77px; height: 14px; background: #c8c8c8; margin-left: 7px; }

/* dialog */
.dialog { position: absolute; left: 18px; top: 28px; width: 338px; height: 637px; background: #eee; box-shadow: 0 1px 0 #bbb; display: flex; flex-direction: column; }
.dlg-head { height: 25px; flex: none; background: #00628a; display: flex; align-items: center; padding: 0 4px 2px 4px; color: #fff; }
.dlg-gear { width: 13px; height: 13px; flex: none; }
.dlg-title { font-size: 16px; margin-left: 8px; margin-right: auto; color: #e8f1f5; }
.dlg-act { width: 12px; height: 12px; flex: none; }
.dlg-q { font-weight: 700; font-size: 16px; margin: 0 14px 0 11px; line-height: 1; }
.dlg-x { width: 11px; height: 11px; margin-right: 7px; }
.dlg-body { flex: 1; display: flex; flex-direction: column; padding: 6px 7px 0 1px; gap: 3px; }
.pn { background: #fff; border: 1px solid #e2e2e2; flex: none; padding: 0 8px; }
.pn-type { height: 41px; padding-top: 7px; }
.pn-orient { height: 25px; }
.pn-size { height: 145px; }
.pn-place { height: 115px; }
.pn-ipw { height: 66px; }
.pn-set { height: 136px; margin-bottom: -3px; }
.sec { height: 25px; padding-bottom: 3px; display: flex; align-items: center; color: #0b6b8e; font-weight: 700; font-size: 14.500px; }
.pn-orient .sec { height: 23px; padding-bottom: 0; }
.sel-box { display: flex; align-items: center; height: 25px; background: #fff; border: 1px solid #8f8f8f; border-width: 1px 2px 2px 1px; border-color: #9a9a9a #a0a0a0 #a0a0a0 #9a9a9a; padding: 0 5px 0 3px; font-size: 13.700px; color: #333; }
.sel-full { width: 312px; }
.sel-half { width: 138px; }
.cube { width: 16px; height: 16px; margin-right: 3px; }
label { font-size: 13.700px; color: #333; white-space: nowrap; margin-top: -2px; }
.frow { display: flex; justify-content: space-between; align-items: center; height: 23px; margin-top: 2.500px; }
.frow-first { margin-top: 6px; }
.frow-reset { height: 29px; margin-top: 2px; }
.fld { width: 82px; height: 23px; background: #fff; border: 1px solid #a8a8a8; text-align: right; padding-right: 3px; font-size: 16px; line-height: 20px; color: #666; white-space: nowrap; }
.reset { width: 29px; height: 29px; padding: 0; background: #fff; border: 1px solid #b5b5b5; display: flex; align-items: center; justify-content: center; }
.reset-ic { width: 20px; height: 20px; }
.place-grid { display: grid; grid-template-columns: 18px 83px 106px 23px 82px; grid-auto-rows: 23px; row-gap: 2.500px; align-items: center; padding-top: 7px; }
.lab2 { grid-column: 4; }
.place-grid label:not(.lab2) { grid-column: 1; }
.place-grid .fld:nth-child(2), .place-grid .fld:nth-child(6), .place-grid .fld:nth-child(10) { grid-column: 2; }
.place-grid .fld { grid-column: 5; }
.fld-hl { padding-right: 2px; }
.fld-hl span { display: block; height: 19px; margin: 1px 0 0 4px; background: #0075d7; color: #fff; line-height: 19px; }
.srow { display: flex; justify-content: space-between; align-items: center; height: 26px; margin-top: 5px; }
.pn-ipw .srow { margin-top: 6px; }
.chk { display: flex; align-items: center; gap: 4px; height: 14px; margin: 10px 0 0 1px; font-size: 13.700px; color: #333; line-height: 14px; }
.chk-first { margin-top: 6px; }
.box { width: 14px; height: 14px; border: 1px solid #7e7e7e; background: #fff; flex: none; display: block; }
.box svg { display: block; width: 12px; height: 12px; }
.collapse { height: 19px; flex: none; border-bottom: 1px solid #ddd; display: flex; justify-content: center; align-items: center; margin: 0 -6px 0 0; padding-right: 6px; }
.dlg-foot { display: flex; justify-content: flex-end; gap: 5px; padding: 4px 9px 0 0; flex: none; }
.btn { width: 55px; height: 25px; font: 13.700px "Noto Sans CJK SC", sans-serif; padding: 0; }
.btn-ok { background: #00628a; color: #fff; border: 1px solid #00628a; }
.btn-cancel { background: #f3f3f3; color: #777; border: 1px solid #2f82a3; width: 54px; }

/* annotations */
.notes { position: absolute; left: 0; top: 0; width: 1530px; height: 857px; pointer-events: none; }
.note-red { position: absolute; left: 458px; top: 129px; font-size: 20.800px; line-height: 30px; color: #f02c2c; white-space: nowrap; }
.note-pink { position: absolute; left: 1053px; top: 738px; font-size: 17.900px; line-height: 26px; color: #ff3df2; white-space: nowrap; }
.wmark { position: absolute; left: 1364px; top: 837px; font: 14px "Liberation Mono", "Noto Sans CJK SC", monospace; letter-spacing: 2px; line-height: 18px; color: #444; white-space: nowrap; }
```
